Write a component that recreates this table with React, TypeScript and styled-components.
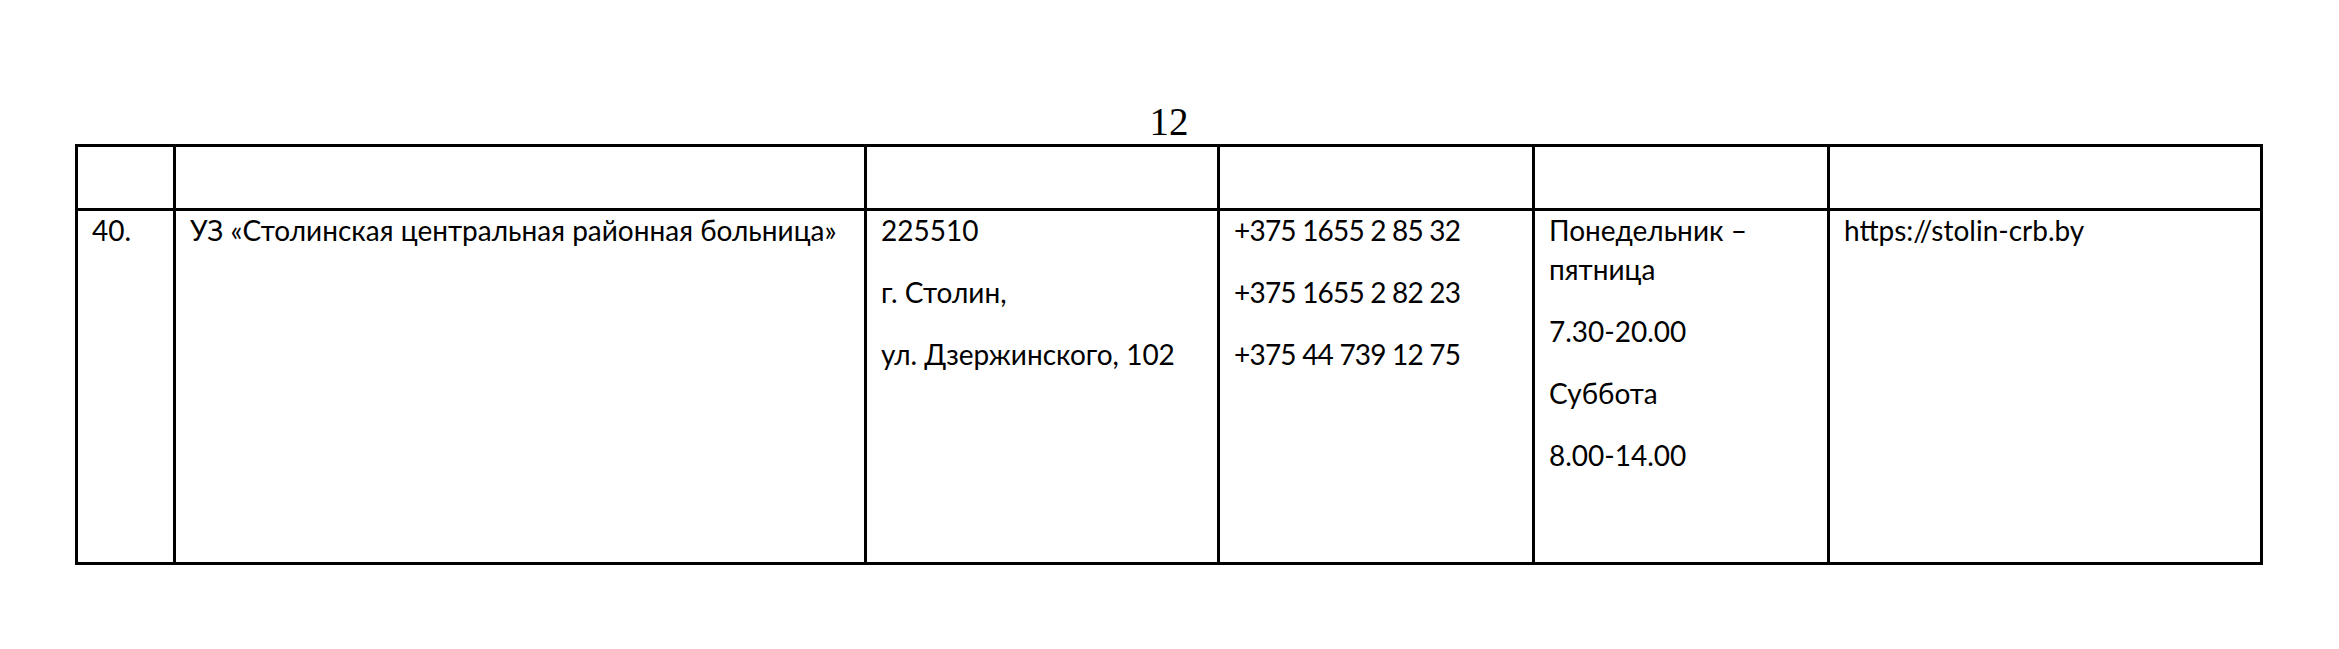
import React from "react";
import styled, { createGlobalStyle } from "styled-components";

const Global = createGlobalStyle`
  html, body { margin: 0; padding: 0; background: #ffffff; }
  body { font-family: "Lato", "Liberation Sans", sans-serif; color: #000; }
`;

const Page = styled.div`
  padding: 100px 0 0 75px;
  width: 2188px;
`;

const PageNumber = styled.div`
  font-family: "Liberation Serif", "Times New Roman", serif;
  font-size: 39px;
  line-height: 44px;
  height: 44px;
  text-align: center;
`;

const Table = styled.div`
  display: grid;
  grid-template-columns: 95px 688px 350px 312px 292px 430px;
  grid-template-rows: 61px 351px;
  gap: 3px;
  padding: 3px;
  background: #000;
  width: fit-content;
`;

const Cell = styled.div<{ $tight?: boolean }>`
  background: #fff;
  padding: 0 10px 0 14px;
  font-size: 28px;
  line-height: 39px;
  letter-spacing: ${(p) => (p.$tight ? "-0.8px" : "0")};
`;

const Para = styled.p`
  margin: 0 0 23px 0;
`;

export default function App() {
  return (
    <>
      <Global />
      <Page>
        <PageNumber>12</PageNumber>
        <Table>
          <Cell />
          <Cell />
          <Cell />
          <Cell />
          <Cell />
          <Cell />
          <Cell>
            <Para>40.</Para>
          </Cell>
          <Cell>
            <Para>УЗ «Столинская центральная районная больница»</Para>
          </Cell>
          <Cell>
            <Para>225510</Para>
            <Para>г. Столин,</Para>
            <Para>ул. Дзержинского, 102</Para>
          </Cell>
          <Cell $tight>
            <Para>+375 1655 2 85 32</Para>
            <Para>+375 1655 2 82 23</Para>
            <Para>+375 44 739 12 75</Para>
          </Cell>
          <Cell>
            <Para>Понедельник – пятница</Para>
            <Para>7.30-20.00</Para>
            <Para>Суббота</Para>
            <Para>8.00-14.00</Para>
          </Cell>
          <Cell>
            <Para>https://stolin-crb.by</Para>
          </Cell>
        </Table>
      </Page>
    </>
  );
}
